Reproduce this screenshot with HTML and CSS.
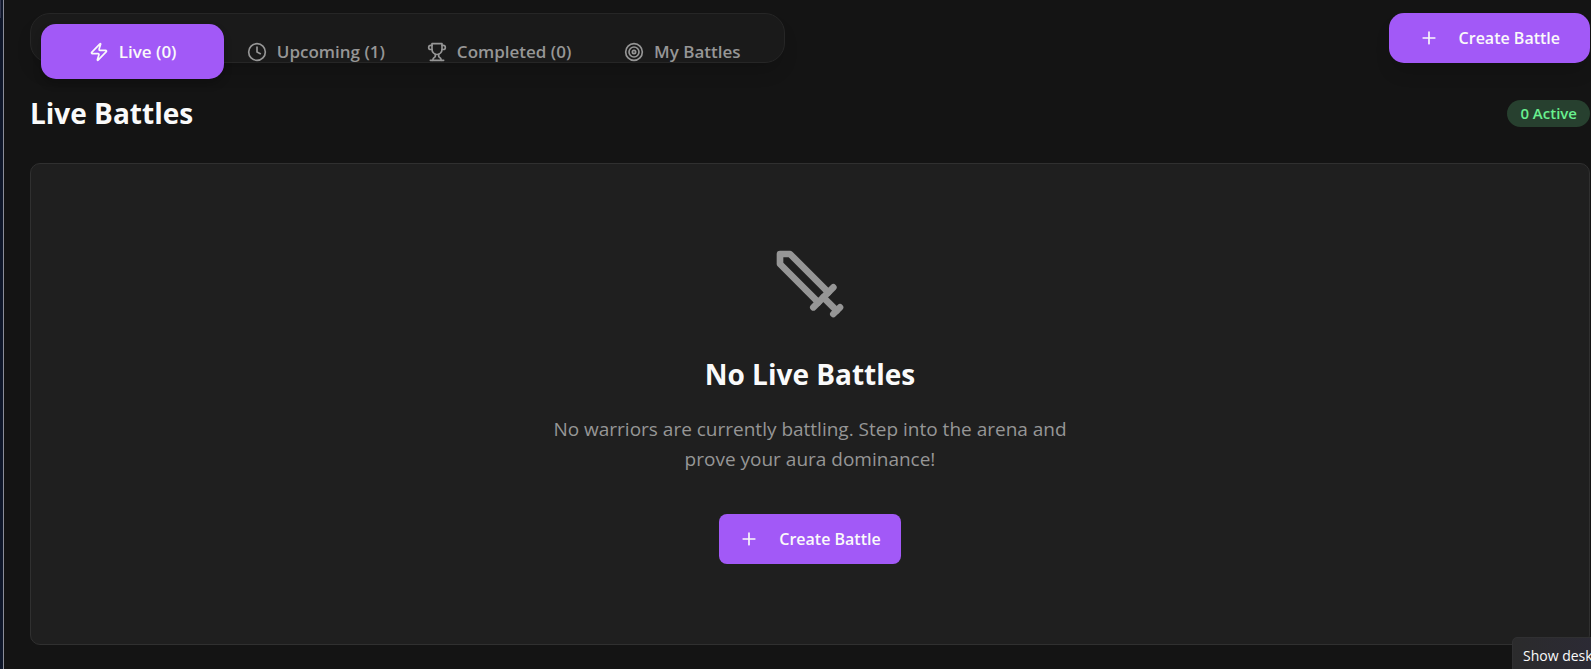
FILE: index.html
```html
<!DOCTYPE html>
<html lang="en">
<head>
<meta charset="utf-8">
<title>Live Battles</title>
<link rel="stylesheet" href="styles.css">
</head>
<body>
<div class="app">
  <aside class="rail"><div class="rail-thumb"></div></aside>
  <main class="content">
    <div class="toolbar">
      <div class="tabs" role="tablist">
        <button class="tab tab-active" role="tab" aria-selected="true">
          <svg class="icon" viewBox="0 0 24 24"><path d="M4 14a1 1 0 0 1-.78-1.63l9.9-10.2a.5.5 0 0 1 .86.46l-1.92 6.02A1 1 0 0 0 13 10h7a1 1 0 0 1 .78 1.63l-9.9 10.2a.5.5 0 0 1-.86-.46l1.92-6.02A1 1 0 0 0 11 14z"/></svg>
          <span>Live (0)</span>
        </button>
        <button class="tab" role="tab" aria-selected="false">
          <svg class="icon" viewBox="0 0 24 24"><circle cx="12" cy="12" r="10"/><path d="M12 6v6l4 2"/></svg>
          <span>Upcoming (1)</span>
        </button>
        <button class="tab" role="tab" aria-selected="false">
          <svg class="icon" viewBox="0 0 24 24"><path d="M6 9H4.500a2.500 2.500 0 0 1 0-5H6"/><path d="M18 9h1.500a2.500 2.500 0 0 0 0-5H18"/><path d="M4 22h16"/><path d="M10 14.660V17c0 .55-.47.98-.97 1.210C7.850 18.750 7 20.240 7 22"/><path d="M14 14.660V17c0 .55.47.98.97 1.210C16.150 18.750 17 20.240 17 22"/><path d="M18 2H6v7a6 6 0 0 0 12 0V2Z"/></svg>
          <span>Completed (0)</span>
        </button>
        <button class="tab" role="tab" aria-selected="false">
          <svg class="icon" viewBox="0 0 24 24"><circle cx="12" cy="12" r="10"/><circle cx="12" cy="12" r="6"/><circle cx="12" cy="12" r="2"/></svg>
          <span>My Battles</span>
        </button>
      </div>
      <button class="create create-large">
        <svg class="icon" viewBox="0 0 24 24"><path d="M5 12h14M12 5v14"/></svg>
        <span>Create Battle</span>
      </button>
    </div>
    <div class="section-head">
      <h2 class="title">Live Battles</h2>
      <span class="badge">0 Active</span>
    </div>
    <section class="empty">
      <svg class="empty-icon" viewBox="0 0 24 24"><path d="M14.500 17.500 3 6V3h3l11.500 11.500"/><path d="m13 19 6-6"/><path d="m16 16 4 4"/><path d="m19 21 2-2"/></svg>
      <h3 class="title empty-title">No Live Battles</h3>
      <p class="empty-text">No warriors are currently battling. Step into the arena and prove your aura dominance!</p>
      <button class="create">
        <svg class="icon" viewBox="0 0 24 24"><path d="M5 12h14M12 5v14"/></svg>
        <span>Create Battle</span>
      </button>
    </section>
  </main>
  <div class="tooltip" role="tooltip">Show desktop</div>
</div>
</body>
</html>
```
FILE: styles.css
```css
* {
  box-sizing: border-box;
}

body {
  margin: 0;
  background: #141414;
  color: #fafafa;
  font-family: "Open Sans", "Noto Sans", sans-serif;
}

button {
  font: inherit;
  border: 0;
  cursor: pointer;
}

.app {
  position: relative;
  display: flex;
  min-height: 100vh;
  overflow: hidden;
}

.rail {
  flex: none;
  width: 4px;
  background: #0f172a;
  border-right: 1px solid #8b8d98;
}

.rail-thumb {
  width: 1px;
  height: 18px;
  background: #33374f;
}

.content {
  flex: 1;
  display: flex;
  flex-direction: column;
  gap: 30px;
  padding: 13px 1px 24px 26px;
}

.toolbar {
  display: flex;
  justify-content: space-between;
  align-items: flex-start;
}

.tabs {
  display: grid;
  grid-template-columns: repeat(4, 1fr);
  align-items: start;
  width: 755px;
  height: 50px;
  padding: 10px;
  background: #1a1a1a;
  border: 1px solid #262626;
  border-radius: 20px;
  box-shadow: 0 12px 18px -4px rgba(0, 0, 0, 0.15);
}

.tab {
  display: flex;
  align-items: center;
  justify-content: center;
  gap: 10px;
  height: 55px;
  padding: 0;
  border-radius: 15px;
  background: transparent;
  color: #969696;
  font-size: 17px;
  font-weight: 600;
  line-height: 25px;
  white-space: nowrap;
}

.tab-active {
  background: #a259f7;
  color: #fafafa;
  box-shadow: 0 5px 8px rgba(0, 0, 0, 0.2);
}

.icon,
.empty-icon {
  flex: none;
  width: 20px;
  height: 20px;
  fill: none;
  stroke: currentColor;
  stroke-width: 2;
  stroke-linecap: round;
  stroke-linejoin: round;
}

.create {
  display: flex;
  align-items: center;
  gap: 20px;
  height: 50px;
  padding: 0 20px;
  border-radius: 8px;
  background: #a259f7;
  color: #fafafa;
  font-size: 16px;
  font-weight: 600;
  white-space: nowrap;
}

.create-large {
  padding: 0 30px;
  border-radius: 15px;
  box-shadow: 0 12px 18px -4px rgba(0, 0, 0, 0.15);
}

.section-head {
  display: flex;
  align-items: center;
  justify-content: space-between;
}

.title {
  margin: 0;
  font-size: 28px;
  font-weight: 700;
  line-height: 40px;
}

.badge {
  padding: 3px 13px;
  border-radius: 14px;
  background: #27402f;
  color: #69f08f;
  font-size: 15px;
  font-weight: 600;
  line-height: 21px;
}

.empty {
  display: flex;
  flex-direction: column;
  align-items: center;
  padding: 80px;
  background: #1f1f1f;
  border: 1px solid #303030;
  border-radius: 10px;
}

.empty-icon {
  width: 80px;
  height: 80px;
  color: #969696;
}

.empty-title {
  margin: 30px 0 20px;
}

.empty-text {
  max-width: 560px;
  margin: 0 0 40px;
  color: #969696;
  font-size: 19px;
  line-height: 30px;
  text-align: center;
}

.tooltip {
  position: absolute;
  left: calc(100% - 79px);
  bottom: -6px;
  padding: 5px 10px;
  border: 1px solid #303032;
  border-radius: 5px;
  background: linear-gradient(90deg, #2b2b2c, #2c2a38);
  color: #fafafa;
  font-size: 14px;
  line-height: 26px;
  white-space: nowrap;
}
```
